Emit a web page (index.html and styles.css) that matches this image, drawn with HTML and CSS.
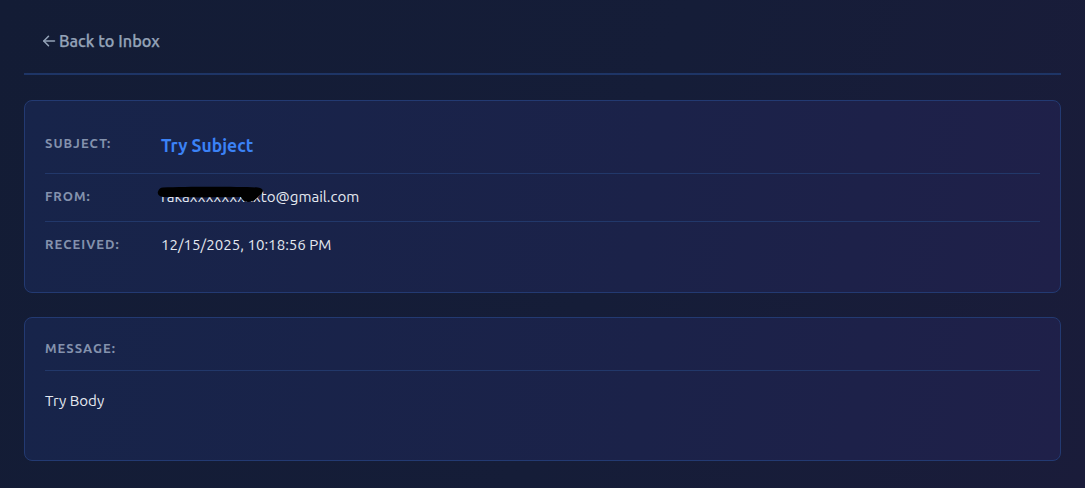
FILE: index.html
```html
<!DOCTYPE html>
<html>
<head>
  <title>Message</title>
  <link rel="stylesheet" href="styles.css">
</head>
<body>
  <div class="page">
    <!-- Top bar -->
    <div class="topbar">
      <a class="back-link" href="#">
        <svg class="back-icon" width="14" height="14" viewBox="0 0 14 14" fill="none" stroke="currentColor" stroke-width="1.5" stroke-linecap="round" stroke-linejoin="round">
          <path d="M12.5 7H1.8"/>
          <path d="M6.5 2.2L1.8 7l4.7 4.8"/>
        </svg>
        Back to Inbox
      </a>
    </div>

    <!-- Details card -->
    <div class="card">
      <div class="row">
        <div class="label">Subject:</div>
        <div class="value subject">Try Subject</div>
      </div>
      <div class="row">
        <div class="label">From:</div>
        <div class="value">
          <span class="email">rakaxxxxxxxxxto@gmail.com<svg class="redact" width="110" height="18" viewBox="0 0 110 18"><path d="M6 1.5C30 0.5 80 0.5 101 1.5c6 0.5 6 5 2 7.5c-2 2-4 5-9 6.5c-5 1.5-9-1-10-4.5c-26 0.5-55 0.5-78 0C2 10.5 0 8 1 5.5C2 3 3.5 1.6 6 1.5z" fill="#000"/></svg></span>
        </div>
      </div>
      <div class="row">
        <div class="label">Received:</div>
        <div class="value">12/15/2025, 10:18:56 PM</div>
      </div>
    </div>

    <!-- Message card -->
    <div class="card message-card">
      <div class="message-head">
        <div class="label">Message:</div>
      </div>
      <div class="message-body">Try Body</div>
    </div>
  </div>
</body>
</html>
```

FILE: styles.css
```css
html, body {
  margin: 0;
  height: 100%;
}

body {
  font-family: "Ubuntu", "Noto Sans", "Open Sans", sans-serif;
  background: linear-gradient(110deg, #131c35 0%, #151d38 55%, #1a1c3a 100%);
  color: #e2e8f0;
}

.page {
  padding: 0 24px 24px;
}

.topbar {
  padding: 29px 18px 20px;
  border-bottom: 2px solid #1e3566;
}

.back-link {
  display: inline-flex;
  align-items: center;
  gap: 3px;
  color: #94a3b8;
  text-decoration: none;
  font-size: 16.3px;
  font-weight: 500;
  line-height: 24px;
  -webkit-text-stroke: 0.25px #94a3b8;
}

.back-icon {
  display: block;
}

.card {
  margin-top: 24px;
  padding: 20px 20px 23px;
  border: 1px solid #233a72;
  border-radius: 8px;
  background: linear-gradient(100deg, #17244a 0%, #1b2249 60%, #1f2049 100%);
}

.topbar + .card {
  margin-top: 25px;
}

.row {
  display: grid;
  grid-template-columns: 116px 1fr;
  align-items: start;
  padding: 12px 0 14px;
  border-bottom: 1px solid #22386a;
}

.row:last-child {
  border-bottom: none;
}

.label {
  font-size: 13px;
  font-weight: 700;
  letter-spacing: 1px;
  text-transform: uppercase;
  color: #8492ad;
  line-height: 20px;
}

.value {
  font-size: 15.1px;
  line-height: 21px;
  color: #e5e9f0;
}

.value.subject {
  font-size: 17.5px;
  font-weight: 600;
  line-height: 26px;
  color: #3b82f6;
}

.email {
  position: relative;
}

.redact {
  position: absolute;
  left: -4px;
  top: -2px;
}

.message-card {
  padding-bottom: 49px;
}

.message-head {
  padding-bottom: 12px;
  border-bottom: 1px solid #22386a;
}

.message-body {
  margin-top: 19px;
  font-size: 15.1px;
  line-height: 21px;
  color: #e5e9f0;
}
```
